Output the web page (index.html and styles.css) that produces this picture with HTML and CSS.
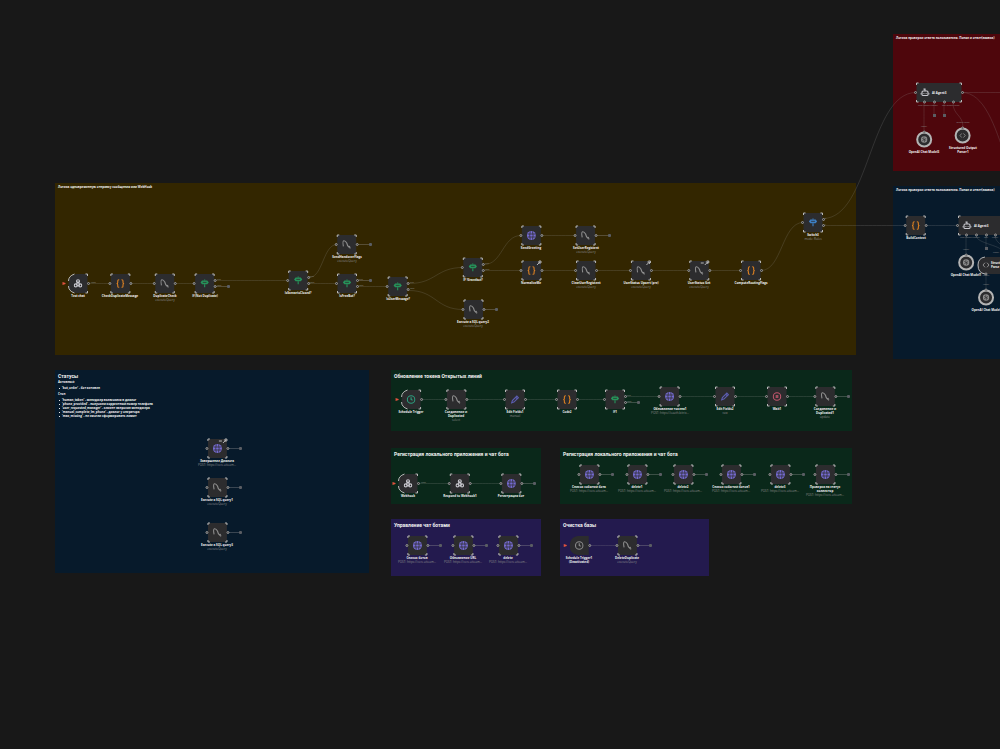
FILE: index.html
```
<!DOCTYPE html>
<html lang="ru">
<head>
    <meta charset="UTF-8">
    <meta name="viewport" content="width=device-width, initial-scale=1.0">
    <title>Workflow</title>
    <link rel="stylesheet" href="styles.css">
</head>
<body>
    <svg class="symbols" aria-hidden="true">
        <symbol id="code" viewBox="0 0 24 24"><path d="M9 2H8Q5 2 5 5V9Q5 12 2 12Q5 12 5 15V19Q5 22 8 22H9M15 2H16Q19 2 19 5V9Q19 12 22 12Q19 12 19 15V19Q19 22 16 22H15"/></symbol>
        <symbol id="sql" viewBox="0 0 24 24"><path d="M3 17Q0 3 4 2Q8 1 12 8Q14 16 17 18L22 22M17 18L21 17"/></symbol>
        <symbol id="sign" viewBox="0 0 24 24"><path class="solid" d="M5 4H19L23 9L19 14H5L1 9Z"/><path d="M12 14V22M12 1V4"/><path class="cut" d="M7 9H17"/></symbol>
        <symbol id="globe" viewBox="0 0 24 24"><circle class="solid" cx="12" cy="12" r="12"/><path class="cut" d="M2 8H22M2 16H22M9 1Q6 12 9 23M15 1Q18 12 15 23"/></symbol>
        <symbol id="hook" viewBox="0 0 24 24"><circle cx="12" cy="6" r="4"/><circle cx="6" cy="17" r="4"/><circle cx="18" cy="17" r="4"/><path d="M12 7L7 16M12 7L17 16M8 18H17"/></symbol>
        <symbol id="clock" viewBox="0 0 24 24"><circle cx="12" cy="12" r="10"/><path d="M12 6V12L16 14"/></symbol>
        <symbol id="pen" viewBox="0 0 24 24"><path d="M3 21L5 15L17 3L21 7L9 19ZM14 6L18 10"/></symbol>
        <symbol id="wait" viewBox="0 0 24 24"><circle cx="12" cy="12" r="10"/><path d="M10 8V16M14 8V16"/></symbol>
        <symbol id="robot" viewBox="0 0 24 24"><rect x="4" y="8" width="16" height="12" rx="3"/><path d="M12 8V3H8M1 13V17M23 13V17M9 13V15M15 13V15"/></symbol>
        <symbol id="openai" viewBox="0 0 24 24"><circle class="solid" cx="12" cy="12" r="11"/><path class="cut" d="M5 8L13 13V21M19 16L11 11V3M5 17L19 8"/></symbol>
        <symbol id="parser" viewBox="0 0 24 24"><path d="M9 5L3 12L9 19M15 5L21 12L15 19"/></symbol>
    </svg>

    <main class="canvas" id="canvas">
        <section class="note yellow webhook"><h2 class="small">Логика одновременную отправку сообщения или WebHook</h2></section>
        <section class="note red check"><h2 class="small">Логика проверки ответа пользователя. Понял и ответ(заявка)</h2></section>
        <section class="note navy context"><h2 class="small">Логика проверки ответа пользователя. Понял и ответ(заявка)</h2></section>
        <section class="note navy statuses">
            <h2>Статусы</h2>
            <h3>Активный</h3>
            <ul>
                <li>'bot_order' - бот активен</li>
            </ul>
            <h3>Стоп</h3>
            <ul>
                <li>'human_taken' - менеджер включился в диалог</li>
                <li>'phone_provided' - получили корректный номер телефона</li>
                <li>'user_requested_manager' - клиент запросил менеджера</li>
                <li>'manual_complete_lm_phone' - диалог у оператора</li>
                <li>'max_missing' - не смогли сформировать лимит</li>
            </ul>
        </section>
        <section class="note green tokens"><h2>Обновление токена Открытых линий</h2></section>
        <section class="note green app"><h2>Регистрация локального приложения и чат бота</h2></section>
        <section class="note green bot"><h2>Регистрация локального приложения и чат бота</h2></section>
        <section class="note purple manage"><h2>Управление чат ботами</h2></section>
        <section class="note purple cleanup"><h2>Очистка базы</h2></section>
    </main>

    <script src="script.js"></script>
</body>
</html>
```
FILE: styles.css
```
body {
    margin: 0;
    background-color: #181818;
    color: #f2f2f2;
    font-family: "Open Sans", Arial, sans-serif;
    font-size: 3px;
    line-height: 4px;
}

.symbols {
    display: none;
}

.canvas {
    position: relative;
    height: 100vh;
    overflow: hidden;
}

/* sticky notes */
.note {
    position: absolute;
    box-sizing: border-box;
    padding: 3px;
    overflow: hidden;
    white-space: nowrap;
}

.note h2 {
    margin: 0;
    font-family: Roboto, Arial, sans-serif;
    font-size: 5px;
    line-height: 6px;
}

.note h2.small {
    font-family: inherit;
    font-size: 3px;
    line-height: 3px;
}

.note h3 {
    margin: 1px 0 2px;
    font-size: 3px;
    line-height: 4px;
}

.note ul {
    margin: 0 0 2px;
    padding: 0;
    font-weight: bold;
    list-style: none;
}

.note li {
    display: flex;
    align-items: center;
    gap: 2px;
    padding-left: 1px;
}

.note li::before {
    content: "";
    width: 1px;
    height: 1px;
    background-color: #e8e8e8;
}

.yellow { background-color: #332600; }
.red { background-color: #4e060c; }
.navy { background-color: #071a2b; }
.green { background-color: #0a281a; }
.purple { background-color: #231a4e; }

.webhook { left: 55px; top: 183px; width: 801px; height: 172px; }
.check { left: 893px; top: 34px; right: 0; height: 137px; }
.context { left: 893px; top: 186px; right: 0; height: 173px; }
.statuses { left: 55px; top: 370px; width: 314px; height: 203px; }
.tokens { left: 391px; top: 370px; width: 461px; height: 61px; }
.app { left: 391px; top: 448px; width: 150px; height: 56px; }
.bot { left: 560px; top: 448px; width: 292px; height: 56px; }
.manage { left: 391px; top: 519px; width: 150px; height: 57px; }
.cleanup { left: 560px; top: 519px; width: 149px; height: 57px; }

/* connections */
.edges {
    position: absolute;
    left: 0;
    top: 0;
    width: 100%;
    height: 100%;
    fill: none;
    stroke: #9a9a9a;
    stroke-opacity: 0.2;
}

.edges .stub {
    stroke-opacity: 0.35;
}

.edges .end {
    fill: #5a5d63;
    stroke: none;
}

/* nodes */
.node {
    position: absolute;
    display: flex;
    flex-direction: column;
    align-items: center;
    transform: translateX(-50%);
    text-align: center;
    white-space: pre;
}

.node svg {
    display: block;
    height: 19px;
    margin-bottom: 1px;
    overflow: visible;
    fill: none;
}

.node strong {
    color: #f2f2f2;
    line-height: 4px;
}

.node small {
    color: #8a8a8c;
    font-size: 3px;
    line-height: 4px;
}

.box { fill: #2c2c2e; }
.corner { stroke: #b8b8b8; }
.ring { fill: #2c2c2e; stroke: #9a9a9a; }
.round { fill: #2c2c2e; stroke: #b4b4b4; stroke-width: 2px; }
.bolt { fill: #e0523e; }

.node use {
    stroke: currentColor;
    stroke-width: 3px;
}

.solid { fill: currentColor; stroke: none; }
.cut { stroke: #2c2c2e; stroke-width: 2px; }

.orange { color: #d87f22; }
.grey { color: #8c8c8c; }
.emerald { color: #26935a; }
.violet { color: #756bd0; }
.white { color: #c9c9cf; }
.teal { color: #2c9e7e; }
.indigo { color: #5b5cae; }
.rose { color: #c0566c; }
.blue { color: #3d7fc4; }

.tag {
    position: absolute;
    color: #8e8e8e;
    font-size: 2px;
    line-height: 4px;
    white-space: nowrap;
}

.tag.center {
    transform: translateX(-50%);
}

.agent-name {
    position: absolute;
    font-weight: bold;
    white-space: pre;
}
```
FILE: script.js
```
const canvas = document.getElementById("canvas");
const sql = "executeQuery";
const url = "POST: https://core.aiteam...";

// x, y, icon, color, title, subtitle, options (t: trigger, o: outputs, s: open end, b: badge)
const nodes = [
    [78, 283, "hook", "white", "Test chat", "", { t: 1, tag: "POST" }],
    [120, 283, "code", "orange", "CheckDuplicateMessage"],
    [165, 283, "sql", "grey", "DuplicateCheck", sql],
    [205, 283, "sign", "emerald", "If (Not Duplicate)", "", { o: 2, s: 3 }],
    [298, 280, "sign", "emerald", "IsScenarioClosed?", "", { o: 2 }],
    [347, 244, "sql", "grey", "SendHandoverFlags", sql, { s: 0 }],
    [347, 283, "sign", "emerald", "IsFreeBot?", "", { o: 2, s: -3 }],
    [398, 286, "sign", "emerald", "IsUserMessage?", "", { o: 2 }],
    [473, 267, "sign", "emerald", "IF !Grantbot?", "", { o: 2 }],
    [473, 309, "sql", "grey", "Execute a SQL query2", sql, { s: 0 }],
    [531, 235, "globe", "violet", "SendGreeting"],
    [586, 235, "sql", "grey", "SetUserRegistent", sql, { s: 0 }],
    [531, 270, "code", "orange", "NormalizeMe", "", { b: 1 }],
    [586, 270, "sql", "grey", "ClearUserRegistent", sql],
    [641, 270, "sql", "grey", "UserStatus Upsert (pre)", sql, { b: 1 }],
    [699, 270, "sql", "grey", "UserStatus Get", sql, { b: 2 }],
    [751, 270, "code", "orange", "ComputeRoutingFlags"],
    [813, 222, "sign", "blue", "Switch3", "mode: Rules", { o: 2 }],
    [916, 225, "code", "orange", "BuildContext"],
    [217, 448, "globe", "violet", "Завершение Диалога", url, { s: 0, b: 2 }],
    [217, 487, "sql", "grey", "Execute a SQL query1", sql, { s: 0 }],
    [217, 532, "sql", "grey", "Execute a SQL query3", sql, { s: 0 }],
    [411, 399, "clock", "teal", "Schedule Trigger", "", { t: 1 }],
    [456, 399, "sql", "grey", "Соединение и\nDuplicated", "select"],
    [515, 399, "pen", "indigo", "Edit Fields1", "manual"],
    [567, 399, "code", "orange", "Code2"],
    [615, 399, "sign", "emerald", "If1", "", { o: 2, s: 3 }],
    [670, 396, "globe", "violet", "Обновление токена1", "POST: https://oauth.bitrix..."],
    [725, 396, "pen", "indigo", "Edit Fields2", "raw"],
    [777, 396, "wait", "rose", "Wait1"],
    [825, 396, "sql", "grey", "Соединение и\nDuplicated1", "update", { s: 0 }],
    [408, 483, "hook", "white", "Webhook", "", { t: 1, tag: "POST" }],
    [460, 483, "hook", "white", "Respond to Webhook1"],
    [511, 483, "globe", "violet", "Регистрация бот", "", { s: 0 }],
    [589, 474, "globe", "violet", "Список событий бота", url, { s: 0 }],
    [637, 474, "globe", "violet", "delete1", url, { s: 0 }],
    [683, 474, "globe", "violet", "delete2", url, { s: 0 }],
    [731, 474, "globe", "violet", "Список событий ботов1", url, { s: 0 }],
    [780, 474, "globe", "violet", "delete3", url, { s: 0 }],
    [825, 474, "globe", "violet", "Проверка на статус\nколлектор", url, { s: 0 }],
    [417, 545, "globe", "violet", "Список ботов", url, { s: 0 }],
    [463, 545, "globe", "violet", "Обновление URL", url, { s: 0 }],
    [508, 545, "globe", "violet", "delete", url, { s: 0 }],
    [579, 545, "clock", "grey", "Schedule Trigger1\n(Deactivated)", "", { t: 1, off: 1 }],
    [627, 545, "sql", "grey", "DeleteDuplicate", sql, { s: 0 }]
];

// x1, y1, x2, y2
const edges = [
    [88, 283, 110, 283], [130, 283, 155, 283], [175, 283, 195, 283], [215, 280, 288, 280],
    [309, 277, 337, 244], [309, 283, 337, 283], [357, 286, 388, 286],
    [409, 283, 463, 267], [409, 290, 463, 309], [484, 264, 521, 235], [484, 270, 521, 270],
    [541, 235, 576, 235], [541, 270, 576, 270], [596, 270, 631, 270], [651, 270, 689, 270],
    [709, 270, 741, 270], [761, 270, 803, 222], [823, 218, 916, 92], [823, 225, 906, 225],
    [926, 225, 958, 225], [962, 92, 1002, 92], [962, 92, 1050, 225],
    [421, 399, 446, 399], [466, 399, 505, 399], [525, 399, 557, 399], [577, 399, 605, 399],
    [625, 396, 660, 396], [680, 396, 715, 396], [735, 396, 767, 396], [787, 396, 815, 396],
    [418, 483, 450, 483], [470, 483, 501, 483], [589, 545, 617, 545]
];

// sub-node connections, drawn from top to bottom
const links = [
    [924, 103, 924, 130], [934, 103, 934, 115], [944, 103, 944, 115], [953, 103, 963, 127],
    [966, 235, 966, 253], [986, 235, 986, 248], [976, 235, 1004, 254], [995, 235, 1004, 252], [986, 274, 986, 289]
];

const models = [
    [924, 139, "openai", "OpenAI Chat Model3"],
    [963, 135, "parser", "Structured Output\nParser1"],
    [966, 262, "openai", "OpenAI Chat Model1"],
    [986, 297, "openai", "OpenAI Chat Model"]
];

const tags = [
    [924, 104, "Chat Model*"], [934, 104, "Memory"], [944, 104, "Tool"], [953, 104, "Output Parser"],
    [924, 125, "Model"], [963, 121, "Output Parser"],
    [966, 236, "Chat Model*"], [976, 236, "Memory"], [986, 236, "Tool"], [995, 236, "Parser"],
    [966, 248, "Model"], [996, 251, "Parser"], [986, 274, "Model*"], [986, 283, "Model"]
];

function ring(x, y) {
    return `<circle class="ring" cx="${x}" cy="${y}" r="1"/>`;
}

function corners(w, h) {
    return `<path class="corner" d="M0 2V0H2M${w - 2} 0H${w}V2M${w} ${h - 2}V${h}H${w - 2}M2 ${h}H0V${h - 2}"/>`;
}

function add(className, x, y, html) {
    const el = document.createElement("div");
    el.className = className;
    el.style.left = x + "px";
    el.style.top = y + "px";
    el.innerHTML = html;
    canvas.appendChild(el);
}

let lines = "";
edges.forEach(([a, b, c, d]) => {
    const m = (a + c) / 2;
    lines += `<path d="M${a} ${b + 0.5}C${m} ${b + 0.5} ${m} ${d + 0.5} ${c} ${d + 0.5}"/>`;
});
links.forEach(([a, b, c, d]) => {
    const m = (b + d) / 2;
    lines += `<path d="M${a} ${b}C${a} ${m} ${c} ${m} ${c} ${d}"/>`;
});
[[934, 115], [944, 115], [986, 248]].forEach(([x, y]) => {
    lines += `<rect class="end" x="${x - 1}" y="${y - 1}" width="3" height="3"/>`;
});
nodes.forEach(([x, y, , , , , opt = {}]) => {
    if (opt.s !== undefined) {
        lines += `<path class="stub" d="M${x + 11} ${y + opt.s + 0.5}H${x + 22}"/><rect class="end" x="${x + 22}" y="${y + opt.s - 1}" width="3" height="3" rx="1"/>`;
    }
});
canvas.insertAdjacentHTML("beforeend", `<svg class="edges">${lines}</svg>`);

nodes.forEach(([x, y, icon, color, title, sub = "", opt = {}]) => {
    const shape = opt.t ? "M8 0H19V19H8Q0 18 0 10Q0 1 8 0Z" : "M0 0H19V19H0Z";
    let svg = `<path class="box" d="${shape}"/>`;
    if (opt.t) {
        svg += `<path class="bolt" d="M-6 8L-3 9V10L-6 11Z"/>`;
        if (!opt.off) {
            svg += `<path class="corner" d="M6 0Q0 2 0 7M0 12Q0 17 6 19M17 0H19V2M19 17V19H17"/>`;
        }
    } else {
        svg += corners(19, 19) + ring(-1, 9.5);
    }
    svg += opt.o ? ring(20, 6.5) + ring(20, 12.5) : ring(20, 9.5);
    svg += `<use href="#${icon}" x="5" y="5" width="9" height="9"/>`;
    if (opt.b) {
        svg += `<path class="corner" d="M15 4L18 1M16 1H18V3${opt.b > 1 ? "M11 2H14" : ""}"/>`;
    }
    add("node " + color, x, y - 9, `<svg width="19" viewBox="0 0 19 19">${svg}</svg><strong>${title}</strong>${sub ? `<small>${sub}</small>` : ""}`);
    if (opt.o) {
        add("tag", x + 12, y - 5, color === "blue" ? "0" : "true");
        add("tag", x + 12, y + 1, color === "blue" ? "1" : "false");
    }
    if (opt.tag) {
        add("tag", x + 13, y - 2, opt.tag);
    }
});

[[916, 83, 45], [958, 216, 45]].forEach(([x, y, w]) => {
    let svg = `<rect class="box" width="${w}" height="19"/>` + corners(w, 19) + ring(-1, 9.5) + ring(w + 1, 9.5);
    [8, 18, 28, 37].forEach(cx => { svg += ring(cx, 19); });
    svg += `<use href="#robot" x="4" y="5" width="9" height="9"/>`;
    add("node white", x + w / 2, y, `<svg width="${w}" viewBox="0 0 ${w} 19">${svg}</svg>`);
    add("agent-name", x + 16, y + 8, "AI Agent3");
});

models.forEach(([x, y, icon, title]) => {
    add("node grey", x, y - 9, `<svg width="19" viewBox="0 0 19 19"><circle class="round" cx="9.5" cy="9.5" r="7"/>${ring(9.5, 2)}<use href="#${icon}" x="6" y="6" width="7" height="7"/></svg><strong>${title}</strong>`);
});

add("node grey", 1000, 257, `<svg width="44" viewBox="0 0 44 19"><path class="box" d="M8 0H44V17H8Q0 16 0 8Q0 1 8 0Z"/><path class="corner" d="M7 0Q0 1 0 8Q0 16 7 17"/>${ring(8, 17)}<use href="#parser" x="4" y="4" width="8" height="8"/></svg>`);
add("agent-name", 991, 261, "Struct\nParse");

tags.forEach(([x, y, text]) => add("tag center", x, y, text));
```
